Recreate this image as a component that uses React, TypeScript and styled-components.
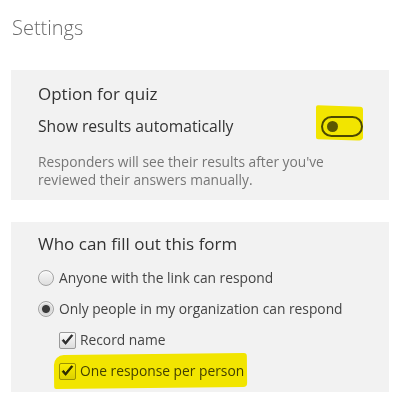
import { ReactNode } from "react";
import styled, { createGlobalStyle } from "styled-components";

const GlobalStyle = createGlobalStyle`
  html, body {
    margin: 0;
    padding: 0;
    background: #ffffff;
  }

  body {
    font-family: "Open Sans", "Noto Sans", "Liberation Sans", sans-serif;
    color: #333333;
  }
`;

type CheckProps = {
  label: string;
  highlight?: boolean;
};

function CheckOption({ label, highlight }: CheckProps) {
  return (
    <CheckRow $highlight={highlight}>
      <CheckBox>
        <svg width="13" height="12" viewBox="0 0 13 12" aria-hidden="true">
          <path
            d="M1.2 6.6 L4.6 10.4 L11.8 1.6 L10.4 0.8 L4.5 7.9 L2.6 5.4 Z"
            fill="#2b2b2b"
            stroke="#2b2b2b"
            strokeWidth="0.9"
            strokeLinejoin="round"
          />
        </svg>
      </CheckBox>
      <OptionLabel>{label}</OptionLabel>
    </CheckRow>
  );
}

function RadioOption({ label, checked }: { label: string; checked?: boolean }) {
  return (
    <RadioRow>
      <Radio $checked={checked} />
      <OptionLabel>{label}</OptionLabel>
    </RadioRow>
  );
}

function Panel({ children }: { children: ReactNode }) {
  return <Section>{children}</Section>;
}

function App() {
  return (
    <Page>
      <GlobalStyle />
      <Title>Settings</Title>

      <Panel>
        <SectionHeading>Option for quiz</SectionHeading>
        <ToggleRow>
          <ToggleLabel>Show results automatically</ToggleLabel>
          <Marker>
            <Toggle role="switch" aria-checked="false">
              <Knob />
            </Toggle>
          </Marker>
        </ToggleRow>
        <Description>
          Responders will see their results after you've
          <br />
          reviewed their answers manually.
        </Description>
      </Panel>

      <Panel>
        <SectionHeading>Who can fill out this form</SectionHeading>
        <Options>
          <RadioOption label="Anyone with the link can respond" />
          <RadioOption label="Only people in my organization can respond" checked />
          <SubOptions>
            <CheckOption label="Record name" />
            <CheckOption label="One response per person" highlight />
          </SubOptions>
        </Options>
      </Panel>
    </Page>
  );
}

export default App;

const Page = styled.div`
  width: 400px;
  height: 400px;
  box-sizing: border-box;
  padding: 14px 11px 0;
  display: flex;
  flex-direction: column;
`;

const Title = styled.h1`
  margin: 0 0 28px 1px;
  font-size: 20px;
  line-height: 28px;
  font-weight: 300;
  color: #6a6a6a;
`;

const Section = styled.section`
  background: #f2f2f2;
  padding: 12px 27px 11px;
  margin-bottom: 22px;
  display: flex;
  flex-direction: column;

  &:last-child {
    padding-top: 10px;
    padding-bottom: 9px;
  }
`;

const SectionHeading = styled.h2`
  margin: 0;
  font-size: 17px;
  line-height: 24px;
  font-weight: 400;
  color: #333333;
`;

const ToggleRow = styled.div`
  display: flex;
  align-items: center;
  justify-content: space-between;
  height: 24px;
  margin-top: 8px;
`;

const ToggleLabel = styled.span`
  font-size: 15.7px;
  line-height: 24px;
  color: #333333;
`;

const Marker = styled.span`
  position: relative;
  display: flex;
  align-items: center;
  margin-right: -1px;

  &::before {
    content: "";
    position: absolute;
    left: -5px;
    right: 0;
    top: -10px;
    bottom: -3px;
    background: #fff200;
    border-radius: 2px 3px 6px 2px / 2px 3px 3px 2px;
    transform: skewY(2deg);
    mix-blend-mode: multiply;
    pointer-events: none;
  }
`;

const Toggle = styled.span`
  box-sizing: border-box;
  width: 42px;
  height: 21px;
  border: 2px solid #4c4c4c;
  border-radius: 11px;
  display: flex;
  align-items: center;
  padding-left: 4px;
`;

const Knob = styled.span`
  width: 11px;
  height: 11px;
  border-radius: 50%;
  background: #5c5c5c;
`;

const Description = styled.p`
  margin: 15px 0 0;
  font-size: 13.75px;
  line-height: 18px;
  color: #767676;
`;

const Options = styled.div`
  display: flex;
  flex-direction: column;
  gap: 7px;
  margin-top: 10px;
`;

const SubOptions = styled.div`
  display: flex;
  flex-direction: column;
  gap: 7px;
  padding-left: 21px;
`;

const RadioRow = styled.label`
  display: flex;
  align-items: center;
  gap: 5px;
  height: 24px;
`;

const Radio = styled.span<{ $checked?: boolean }>`
  box-sizing: border-box;
  width: 16px;
  height: 16px;
  border-radius: 50%;
  border: 1px solid #a3a3a3;
  background: ${({ $checked }) =>
    $checked
      ? "radial-gradient(circle, #3a3a3a 0 3.5px, #d6d6d6 4.5px, #f4f4f4 100%)"
      : "linear-gradient(#f7f7f7, #dedede)"};
  box-shadow: inset 0 1px 1px rgba(255, 255, 255, 0.8);
`;

const CheckRow = styled.label<{ $highlight?: boolean }>`
  position: relative;
  display: flex;
  align-items: center;
  gap: 4px;
  height: 24px;

  &::after {
    content: "";
    display: ${({ $highlight }) => ($highlight ? "block" : "none")};
    position: absolute;
    left: -5px;
    top: -5px;
    bottom: -5px;
    width: 193px;
    background: #fff200;
    border-radius: 10px 3px 4px 2px;
    transform: rotate(-0.6deg);
    mix-blend-mode: multiply;
    pointer-events: none;
  }
`;

const CheckBox = styled.span`
  box-sizing: border-box;
  width: 17px;
  height: 17px;
  border: 1px solid #9a9a9a;
  border-radius: 2px;
  background: linear-gradient(#fafafa, #dcdcdc);
  display: flex;
  align-items: center;
  justify-content: center;
`;

const OptionLabel = styled.span`
  font-size: 13.8px;
  line-height: 24px;
  color: #444444;
`;
